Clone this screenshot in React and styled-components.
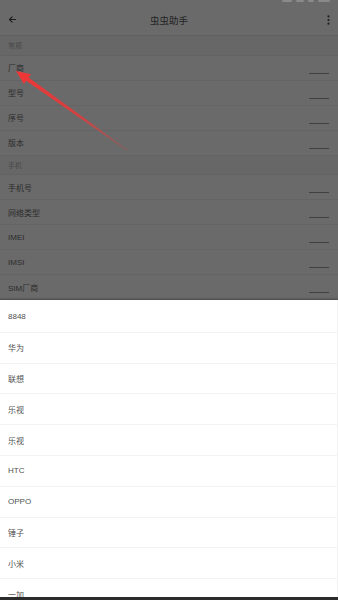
import styled, { createGlobalStyle } from "styled-components";

const GlobalStyle = createGlobalStyle`
  html, body {
    margin: 0;
    padding: 0;
    background: #ffffff;
  }
  body {
    font-family: "Liberation Sans", "Noto Sans CJK SC", sans-serif;
  }
`;

const Screen = styled.div`
  position: relative;
  width: 338px;
  height: 600px;
  overflow: hidden;
  display: flex;
  flex-direction: column;
  border-bottom: 3px solid #2b2b2b;
  box-sizing: border-box;
`;

const Dimmed = styled.div`
  background: #6a6a6a;
  display: flex;
  flex-direction: column;
  height: 300px;
  flex-shrink: 0;
`;

const StatusBar = styled.div`
  height: 5px;
  display: flex;
  justify-content: flex-end;
  gap: 4px;
  padding-right: 8px;
  overflow: hidden;
`;

const StatusIcon = styled.span`
  width: ${(p) => p.w}px;
  height: 2px;
  background: #8a8a8a;
  border-radius: 1px;
`;

const AppBar = styled.div`
  height: 30px;
  display: flex;
  align-items: center;
  justify-content: space-between;
  padding: 0 8px 0 8px;
  border-bottom: 1px solid #5f5f5f;
  color: #222;
`;

const Title = styled.div`
  font-size: 9.5px;
  color: #252525;
`;

const IconBox = styled.div`
  width: 12px;
  display: flex;
  align-items: center;
  justify-content: ${(p) => (p.right ? "flex-end" : "flex-start")};
`;

const SectionHeader = styled.div`
  height: ${(p) => p.h}px;
  display: flex;
  align-items: center;
  padding-left: 8px;
  font-size: 7px;
  color: #474747;
  background: #676767;
  border-bottom: 1px solid #626262;
`;

const Field = styled.div`
  height: 25px;
  display: flex;
  align-items: center;
  justify-content: space-between;
  padding: 0 9px 0 8px;
  box-sizing: border-box;
  border-bottom: 1px solid #646464;
`;

const FieldLabel = styled.span`
  font-size: 8px;
  color: #2c2c2c;
`;

const Underline = styled.span`
  width: 20px;
  height: 1px;
  background: #404040;
  align-self: flex-end;
  margin-bottom: 6px;
`;

const Sheet = styled.div`
  flex: 1;
  padding-top: 2px;
  background: #ffffff;
  border-right: 1px solid #f2f2f2;
  box-shadow: 0 -1px 2px rgba(0, 0, 0, 0.3);
`;

const Option = styled.div`
  height: 30.8px;
  display: flex;
  align-items: center;
  padding-left: 8px;
  box-sizing: border-box;
  border-bottom: 1px solid #f3f3f3;
  font-size: 8px;
  color: #505050;
`;

const Arrow = styled.svg`
  position: absolute;
  left: 0;
  top: 0;
  pointer-events: none;
`;

const general = ["厂商", "型号", "序号", "版本"];
const phone = ["手机号", "网络类型", "IMEI", "IMSI", "SIM厂商"];
const vendors = ["8848", "华为", "联想", "乐视", "乐视", "HTC", "OPPO", "锤子", "小米", "一加"];

function App() {
  return (
    <Screen>
      <GlobalStyle />
      <Dimmed>
        <StatusBar>
          <StatusIcon w={10} />
          <StatusIcon w={8} />
          <StatusIcon w={6} />
          <StatusIcon w={12} />
        </StatusBar>
        <AppBar>
          <IconBox>
            <svg width="9" height="9" viewBox="0 0 24 24" fill="none" stroke="#1e1e1e" strokeWidth="3" strokeLinecap="round" strokeLinejoin="round">
              <path d="M20 12H5" />
              <path d="M11 5l-7 7 7 7" />
            </svg>
          </IconBox>
          <Title>虫虫助手</Title>
          <IconBox right>
            <svg width="3" height="10" viewBox="0 0 3 10">
              <circle cx="1.5" cy="1.3" r="1.1" fill="#1e1e1e" />
              <circle cx="1.5" cy="5" r="1.1" fill="#1e1e1e" />
              <circle cx="1.5" cy="8.7" r="1.1" fill="#1e1e1e" />
            </svg>
          </IconBox>
        </AppBar>
        <SectionHeader h={19}>常规</SectionHeader>
        {general.map((label) => (
          <Field key={label}>
            <FieldLabel>{label}</FieldLabel>
            <Underline />
          </Field>
        ))}
        <SectionHeader h={19}>手机</SectionHeader>
        {phone.map((label) => (
          <Field key={label}>
            <FieldLabel>{label}</FieldLabel>
            <Underline />
          </Field>
        ))}
      </Dimmed>
      <Sheet>
        {vendors.map((name, i) => (
          <Option key={i}>{name}</Option>
        ))}
      </Sheet>
      <Arrow width="338" height="600" viewBox="0 0 338 600">
        <defs>
          <linearGradient id="arrowFade" x1="16" y1="71" x2="127" y2="150" gradientUnits="userSpaceOnUse">
            <stop offset="0" stopColor="#f23535" />
            <stop offset="0.6" stopColor="#e63a3a" stopOpacity="0.85" />
            <stop offset="1" stopColor="#d84444" stopOpacity="0.25" />
          </linearGradient>
        </defs>
        <polygon
          points="16,71 31,74.2 28.6,77.5 127.3,149.6 126.7,150.4 26.2,80.7 23.9,84"
          fill="url(#arrowFade)"
        />
      </Arrow>
    </Screen>
  );
}

export default App;
